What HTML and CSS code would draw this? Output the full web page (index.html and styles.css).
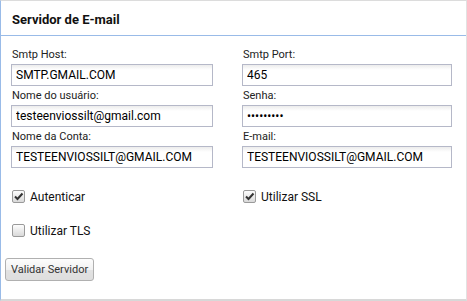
FILE: index.html
```html
<!DOCTYPE html>
<html lang="pt">
  <head>
    <meta charset="UTF-8" />
    <title>Servidor de E-mail</title>
    <link rel="stylesheet" href="styles.css">
  </head>
  <body>
    <div class="panel">
      <div class="panel-header">Servidor de E-mail</div>
      <form class="panel-body">
        <div class="fields">
          <div class="field">
            <label>Smtp Host:</label>
            <input type="text" class="short" value="SMTP.GMAIL.COM" />
          </div>
          <div class="field">
            <label>Smtp Port:</label>
            <input type="text" class="long" value="465" />
          </div>
          <div class="field">
            <label>Nome do usuário:</label>
            <input type="text" class="short" value="testeenviossilt@gmail.com" />
          </div>
          <div class="field">
            <label>Senha:</label>
            <input type="password" class="long" value="123456789" />
          </div>
          <div class="field">
            <label>Nome da Conta:</label>
            <input type="text" class="short" value="TESTEENVIOSSILT@GMAIL.COM" />
          </div>
          <div class="field">
            <label>E-mail:</label>
            <input type="text" class="long" value="TESTEENVIOSSILT@GMAIL.COM" />
          </div>
        </div>

        <div class="options">
          <div class="option">
            <span class="box checked">
              <svg width="11" height="11" viewBox="0 0 11 11"><path d="M2 5.5 L4.5 8 L9.5 2.5" fill="none" stroke="#333" stroke-width="2"/></svg>
            </span>
            <span>Autenticar</span>
          </div>
          <div class="option">
            <span class="box checked">
              <svg width="11" height="11" viewBox="0 0 11 11"><path d="M2 5.5 L4.5 8 L9.5 2.5" fill="none" stroke="#333" stroke-width="2"/></svg>
            </span>
            <span>Utilizar SSL</span>
          </div>
          <div class="option">
            <span class="box"></span>
            <span>Utilizar TLS</span>
          </div>
        </div>

        <button type="button" class="btn">Validar Servidor</button>
      </form>
    </div>
  </body>
</html>
```

FILE: styles.css
```css
body {
  margin: 0;
  font-family: Roboto, "Liberation Sans", Arial, sans-serif;
  color: #111;
  background: #fff;
}
.panel {
  width: 467px;
  height: 301px;
  box-sizing: border-box;
  border-top: 1px solid #dcdcdc;
  border-left: 1px solid #99bbe8;
  border-right: 1px solid #e2e2e2;
  border-bottom: 2px solid #d8d8d8;
}
.panel-header {
  height: 35px;
  box-sizing: border-box;
  display: flex;
  align-items: center;
  padding: 3px 11px 0;
  border-bottom: 1px solid #99bbe8;
  font-size: 13px;
  font-weight: bold;
  color: #111;
}
.panel-body {
  padding: 9px 0 0 10px;
  margin: 0;
}
.fields {
  display: grid;
  grid-template-columns: 231px 1fr;
}
.field label {
  display: block;
  height: 19px;
  line-height: 19px;
  font-size: 11px;
  color: #222;
  padding-left: 1px;
}
.field input {
  display: block;
  height: 22px;
  box-sizing: border-box;
  margin: 0;
  padding: 0 4px;
  border: 1px solid #b5b8c8;
  background: linear-gradient(#ececec, #fff 5px);
  font-family: Roboto, "Liberation Sans", Arial, sans-serif;
  font-size: 12px;
  color: #000;
  outline: none;
}
.field input.short {
  width: 202px;
}
.field input.long {
  width: 210px;
}
.options {
  display: grid;
  grid-template-columns: 231px 1fr;
  row-gap: 21px;
  margin-top: 22px;
  padding-left: 1px;
}
.option {
  display: flex;
  align-items: center;
  gap: 5px;
  height: 13px;
  font-size: 12px;
  color: #111;
}
.box {
  width: 11px;
  height: 11px;
  border: 1px solid #9a9a9a;
  border-radius: 2px;
  background: linear-gradient(#fdfdfd, #d9d9d9);
  display: flex;
  align-items: center;
  justify-content: center;
}
.btn {
  display: block;
  margin: 21px 0 0 -6px;
  height: 23px;
  padding: 0 5px;
  border: 1px solid #b0b0b0;
  border-radius: 3px;
  background: linear-gradient(#fdfdfd 0%, #f1f1f1 50%, #e2e2e2 51%, #dedede 100%);
  font-family: Roboto, "Liberation Sans", Arial, sans-serif;
  font-size: 11px;
  color: #333;
}
```
